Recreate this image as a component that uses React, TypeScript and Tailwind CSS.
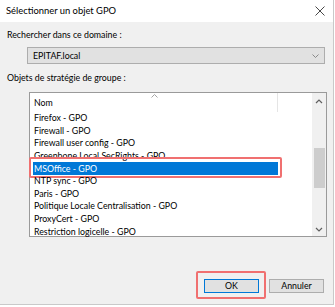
const items = [
  'Firefox - GPO',
  'Firewall - GPO',
  'Firewall user config - GPO',
  'Greenbone Local SecRights - GPO',
  'MSOffice - GPO',
  'NTP sync - GPO',
  'Paris - GPO',
  'Politique Locale Centralisation - GPO',
  'ProxyCert - GPO',
  'Restriction logicelle - GPO',
]

function Chevron({ up = false }: { up?: boolean }) {
  return (
    <svg width="8" height="5" viewBox="0 0 8 5" className={up ? '' : 'rotate-180'}>
      <path d="M1 4 L4 1 L7 4" fill="none" stroke="#606060" strokeWidth="1.2" />
    </svg>
  )
}

export default function App() {
  return (
    <div className="w-[335px] h-[307px] bg-white overflow-hidden text-black font-['Lato',sans-serif]">
      <div className="w-[334px] h-[305px] bg-[#f0f0f0] border-r border-b border-[#c9c9c9] flex flex-col">
        {/* Title bar */}
        <div className="h-[22px] shrink-0 bg-white flex items-center justify-between pl-[6px] pr-[8px]">
          <span className="text-[9.4px] leading-none">Sélectionner un objet GPO</span>
          <svg width="10" height="10" viewBox="0 0 10 10">
            <path d="M0.5 0.5 L9.5 9.5 M9.5 0.5 L0.5 9.5" stroke="#333" strokeWidth="0.9" />
          </svg>
        </div>

        <div className="flex-1 flex flex-col pl-[7px] pb-[11px] text-[8.8px] leading-[12px]">
          <div className="mt-[7px] h-[12px] shrink-0">Rechercher dans ce domaine :</div>

          {/* Combobox */}
          <div className="mt-[6px] ml-[20px] w-[298px] h-[17px] shrink-0 bg-[#e1e1e1] border border-[#adadad] flex items-center justify-between pl-[5px] pr-[5px]">
            <span>EPITAF.local</span>
            <svg width="7" height="4" viewBox="0 0 7 4">
              <path d="M0.5 0.5 L3.5 3.5 L6.5 0.5" fill="none" stroke="#808080" strokeWidth="0.9" />
            </svg>
          </div>

          <div className="mt-[8px] h-[12px] shrink-0">Objets de stratégie de groupe :</div>

          {/* List view */}
          <div className="mt-[8px] ml-[22px] w-[298px] h-[145px] shrink-0 bg-white border border-[#9a9a9a] flex">
            <div className="flex-1 flex flex-col">
              <div className="h-[19px] shrink-0 flex relative">
                <div className="w-[248px] border-r border-[#e5e5e5] pl-[4px] flex items-center">Nom</div>
                <svg width="7" height="4" viewBox="0 0 7 4" className="absolute left-[121px] top-[1px]">
                  <path d="M0.5 3.5 L3.5 0.5 L6.5 3.5" fill="none" stroke="#9a9a9a" strokeWidth="0.9" />
                </svg>
              </div>
              {items.map((item) => {
                const selected = item === 'MSOffice - GPO'
                return (
                  <div key={item} className="h-[12.6px] shrink-0 relative">
                    <div
                      className={
                        selected
                          ? 'ml-[3px] w-[245px] h-full pl-[1px] flex items-center bg-[#0078d7] text-white'
                          : 'ml-[3px] w-[245px] h-full pl-[1px] flex items-center'
                      }
                    >
                      {item}
                    </div>
                    {selected && (
                      <span className="absolute left-[-1px] top-[-5px] w-[253px] h-[21px] border-2 border-[#f07070] rounded-[2px]" />
                    )}
                  </div>
                )
              })}
            </div>

            {/* Scrollbar */}
            <div className="w-[14px] bg-[#f0f0f0] flex flex-col items-center">
              <div className="h-[14px] flex items-center justify-center mt-[1px]">
                <Chevron up />
              </div>
              <div className="mt-[40px] w-[11px] h-[40px] bg-[#cdcdcd]" />
              <div className="flex-1" />
              <div className="h-[14px] flex items-center justify-center">
                <Chevron />
              </div>
            </div>
          </div>

          <div className="flex-1" />

          {/* Buttons */}
          <div className="shrink-0 flex justify-end gap-[10px] pr-[9px]">
            <div className="relative">
              <button className="w-[55px] h-[14px] bg-[#e1e1e1] border border-[#0078d7] text-[8.8px] leading-none flex items-center justify-center">
                OK
              </button>
              <span className="absolute left-[-8px] top-[-8px] w-[70px] h-[28px] border-2 border-[#f07070] rounded-[2px]" />
            </div>
            <button className="w-[55px] h-[14px] bg-[#e1e1e1] border border-[#adadad] text-[8.8px] leading-none flex items-center justify-center">
              Annuler
            </button>
          </div>
        </div>
      </div>
    </div>
  )
}
